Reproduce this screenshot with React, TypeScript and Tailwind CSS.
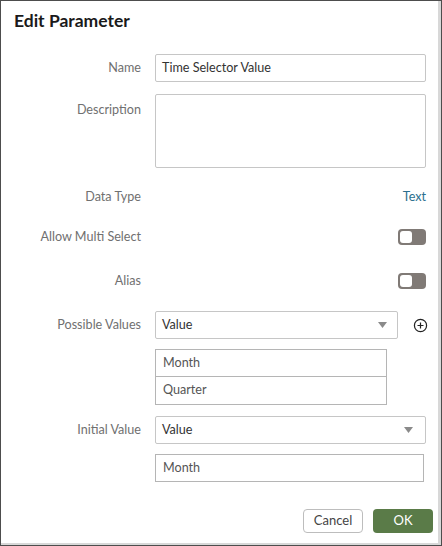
import React from 'react';

const font = { fontFamily: 'Lato, "Noto Sans", Arial, sans-serif' };

function Caret() {
  return (
    <svg width="9" height="6" viewBox="0 0 9 6" className="shrink-0">
      <path d="M0 0 H9 L4.5 6 Z" fill="#8a8a8a" />
    </svg>
  );
}

function Toggle() {
  return (
    <div className="w-[28px] h-[16px] rounded-[4px] bg-[#807a76] p-[2px] flex items-center">
      <div className="w-[12px] h-[12px] rounded-[3px] bg-white" />
    </div>
  );
}

function Label({ children, top = false }: { children: React.ReactNode; top?: boolean }) {
  return (
    <div className={`w-[140px] shrink-0 text-right text-[12.6px] text-[#707070] ${top ? 'pt-[7px]' : ''}`}>
      {children}
    </div>
  );
}

export default function App() {
  return (
    <div style={font} className="w-[442px] h-[546px] border border-[#4d4d4d] bg-white">
      <div className="h-full border-r-[3px] border-b-[2px] border-[#d8d8d8] relative">
        {/* Header */}
        <h1 className="pl-[13px] pt-[7px] text-[17.5px] font-bold text-[#1a1a1a] leading-[26px]">Edit Parameter</h1>

        <div className="mt-[20px] flex flex-col">
          {/* Name */}
          <div className="flex items-center h-[28px] gap-[14px]">
            <Label>Name</Label>
            <div className="w-[271px] h-[28px] border border-[#c6c6c6] rounded-[2px] flex items-center px-[6px] text-[12.6px] text-[#333]">
              Time Selector Value
            </div>
          </div>

          {/* Description */}
          <div className="flex items-start mt-[12px] gap-[14px]">
            <Label top>Description</Label>
            <div className="w-[271px] h-[74px] border border-[#c6c6c6] rounded-[2px]" />
          </div>

          {/* Data Type */}
          <div className="flex items-center h-[28px] mt-[15px] gap-[14px]">
            <Label>Data Type</Label>
            <div className="w-[271px] text-right text-[12.6px] text-[#2b6f8e]">Text</div>
          </div>

          {/* Allow Multi Select */}
          <div className="flex items-center h-[28px] mt-[12px] gap-[14px]">
            <Label>Allow Multi Select</Label>
            <div className="w-[271px] flex justify-end">
              <Toggle />
            </div>
          </div>

          {/* Alias */}
          <div className="flex items-center h-[28px] mt-[16px] gap-[14px]">
            <Label>Alias</Label>
            <div className="w-[271px] flex justify-end">
              <Toggle />
            </div>
          </div>

          {/* Possible Values */}
          <div className="flex items-center h-[28px] mt-[16px] gap-[14px]">
            <Label>Possible Values</Label>
            <div className="w-[243px] h-[28px] border border-[#c6c6c6] rounded-[2px] flex items-center justify-between pl-[6px] pr-[10px] text-[12.6px] text-[#333]">
              <span>Value</span>
              <Caret />
            </div>
            <svg width="15" height="15" viewBox="0 0 16 16" className="ml-[1px]">
              <circle cx="8" cy="8" r="6.5" fill="none" stroke="#222" strokeWidth="1.3" />
              <path d="M8 4.8 V11.2 M4.8 8 H11.2" stroke="#222" strokeWidth="1.3" />
            </svg>
          </div>

          {/* Possible values list */}
          <div className="flex mt-[10px] gap-[14px]">
            <div className="w-[140px] shrink-0" />
            <div className="w-[232px] border border-[#b5b5b5] text-[12.6px] text-[#555]">
              <div className="h-[27px] flex items-center px-[7px] border-b border-[#b5b5b5]">Month</div>
              <div className="h-[27px] flex items-center px-[7px]">Quarter</div>
            </div>
          </div>

          {/* Initial Value */}
          <div className="flex items-center h-[28px] mt-[11px] gap-[14px]">
            <Label>Initial Value</Label>
            <div className="w-[271px] h-[28px] border border-[#c6c6c6] rounded-[2px] flex items-center justify-between pl-[6px] pr-[12px] text-[12.6px] text-[#333]">
              <span>Value</span>
              <Caret />
            </div>
          </div>

          <div className="flex mt-[10px] gap-[14px]">
            <div className="w-[140px] shrink-0" />
            <div className="w-[269px] h-[28px] border border-[#b5b5b5] flex items-center px-[7px] text-[12.6px] text-[#555]">
              Month
            </div>
          </div>

          {/* Footer buttons */}
          <div className="flex justify-end gap-[10px] mt-[27px] pr-[5px]">
            <button className="w-[60px] h-[24px] border border-[#bdbdbd] rounded-[4px] bg-white text-[13px] text-[#444]">
              Cancel
            </button>
            <button className="w-[60px] h-[24px] rounded-[4px] bg-[#5a7b48] text-[13px] text-white">
              OK
            </button>
          </div>
        </div>
      </div>
    </div>
  );
}
